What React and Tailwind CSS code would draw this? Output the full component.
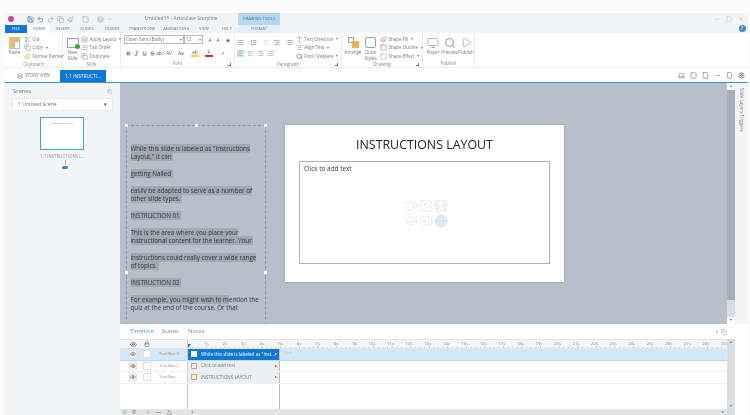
import React from "react";
import {
  Save, Undo2, Redo2, Scissors, Copy, Paintbrush, Bold, Italic, Underline, Strikethrough,
  List, ListOrdered, AlignLeft, AlignCenter, AlignRight, AlignJustify, Search, Settings,
  Laptop, Tablet, Smartphone, Eye, Lock, Video, Image, Film, GraduationCap, IdCard, Globe,
  ChevronDown, Play, Layers, Minus, Square, X, Monitor, Type, Trash2, Plus, Mountain,
} from "lucide-react";

const ribbonTabs = [
  ["INSERT", "w-[26px]"],
  ["SLIDES", "w-[22px]"],
  ["DESIGN", "w-[28px]"],
  ["TRANSITIONS", "w-[32px]"],
  ["ANIMATIONS", "w-[36px]"],
  ["VIEW", "w-[20px]"],
  ["HELP", "w-[26px]"],
];

const slideLines = [
  ["While this slide is labeled as \"Instructions", true],
  ["Layout,\" it can ", true],
  ["", false],
  ["getting Nailed ", true],
  ["", false],
  ["easily be adapted to serve as a number of", true],
  ["other slide types. ", true],
  ["", false],
  ["INSTRUCTION 01 ", true],
  ["", false],
  ["This is the area where you place your", true],
  ["instructional content for the learner. Your ", true],
  ["", false],
  ["instructions could really cover a wide range", true],
  ["of topics. ", true],
  ["", false],
  ["INSTRUCTION 02 ", true],
  ["", false],
  ["For example, you might wish to m", true, "ention the"],
  ["quiz at the end of the course. Or that", false],
];

const seconds = Array.from({ length: 29 }, (_, i) => i + 1);

const timelineRows = [
  { name: "Text Box 3", label: "While this slide is labeled as \"Inst...", selected: true, box: "bg-white border-white" },
  { name: "Text Box 1", label: "Click to add text", box: "border-[#aaa]" },
  { name: "Text Box", label: "INSTRUCTIONS LAYOUT", box: "border-[#d9a760] bg-[#f7efe2]" },
];

const SmallAction = ({ icon: Icon, label, color = "text-gray-500", arrow }) => (
  <div className="flex items-center gap-[1.5px] h-[8.5px] text-[4.5px] text-[#777] whitespace-nowrap">
    <Icon size={7} strokeWidth={1.5} className={`shrink-0 ${color}`} />
    <span>{label}</span>
    {arrow && <span className="text-[4px] ml-[1px]">▾</span>}
  </div>
);

const BigAction = ({ label, w, children }) => (
  <div className={`flex flex-col items-center shrink-0 text-[4.5px] leading-[5.5px] text-[#777] ${w}`}>
    <div className="h-[15px] flex items-center justify-center">{children}</div>
    <span className="text-center">{label}</span>
  </div>
);

const RibbonGroup = ({ title, w, launcher, children }) => (
  <div className={`flex flex-col shrink-0 h-full border-r border-[#ececec] ${w}`}>
    <div className="flex flex-1 pl-[2px] pt-[2px]">{children}</div>
    <div className="h-[7px] relative text-center text-[4.5px] leading-[6px] text-[#888]">
      {title}
      {launcher && <span className="absolute right-[3px] bottom-[1px] w-[3px] h-[3px] border-r border-b border-gray-500" />}
    </div>
  </div>
);

const FontIcon = ({ children, w = "w-[8px]", className = "" }) => (
  <span className={`text-center text-[4.6px] leading-[6px] text-[#555] shrink-0 whitespace-nowrap ${w} ${className}`}>{children}</span>
);

export default function App() {
  return (
    <div className="w-[750px] h-[415px] overflow-hidden bg-[#fbfbfb] pt-[13px] pl-[5px] pr-[2px] font-['Open_Sans',sans-serif] blur-[0.3px]">
      {/* title bar */}
      <div className="h-[12px] bg-[#f2f3f5] flex items-center relative">
        <div className="ml-[3px] w-[6px] h-[6px] rounded-full bg-[#c04a94]" />
        <div className="ml-[13px] flex items-center gap-[3px] text-gray-400 w-[90px] shrink-0">
          <Save size={7} className="text-[#1f6fb5]" />
          <Undo2 size={7} className="text-[#1f6fb5]" />
          <Redo2 size={7} />
          <Copy size={7} />
          <Paintbrush size={7} />
          <Square size={7} className="ml-[5px]" />
          <Layers size={7} className="ml-[5px]" />
          <ChevronDown size={6} />
        </div>
        <span className="ml-[28px] text-[5px] text-[#777] whitespace-nowrap">Untitled1* - Articulate Storyline</span>
        <div className="absolute left-[233px] top-0 w-[42px] h-[20px] flex flex-col">
          <div className="h-[12px] bg-[#b6d8f0] text-[4px] leading-[12px] text-center text-[#5a6b7a] whitespace-nowrap">DRAWING TOOLS</div>
          <div className="h-[8px] bg-[#e3f0fa] text-[4px] leading-[8px] text-center text-[#777]">FORMAT</div>
        </div>
        <div className="ml-auto flex items-center gap-[6px] pr-[4px] text-[#c0c0c0]">
          <Minus size={6} />
          <Square size={6} />
          <X size={6} />
        </div>
      </div>

      {/* ribbon tabs */}
      <div className="h-[8px] bg-[#f2f3f5] flex items-stretch text-[4.2px] text-[#777]">
        <div className="w-[22px] bg-[#0f78d4] text-white text-center leading-[8px]">FILE</div>
        <div className="w-[22px] ml-[1px] bg-white text-[#2b7cc4] text-center leading-[8px]">HOME</div>
        {ribbonTabs.map(([tab, w]) => (
          <div key={tab} className={`${w} text-center leading-[8px] whitespace-nowrap`}>{tab}</div>
        ))}
        <div className="ml-auto mr-[2.5px] w-[7px] h-[7px] rounded-full bg-[#3f8fd0] text-white text-center text-[5px] leading-[7px]">?</div>
      </div>

      {/* ribbon */}
      <div className="h-[35px] bg-white flex border-b border-[#eeeeee]">
        <RibbonGroup title="Clipboard" w="w-[58px]">
          <BigAction label="Paste" w="w-[15px]">
            <div className="w-[11px] h-[12px] bg-[#e9bd72] rounded-[1px] relative">
              <span className="absolute right-0 bottom-0 w-[6px] h-[8px] bg-white border border-[#bbb]" />
            </div>
          </BigAction>
          <div className="ml-[2px] flex flex-col">
            <SmallAction icon={Scissors} label="Cut" />
            <SmallAction icon={Copy} label="Copy" arrow />
            <SmallAction icon={Paintbrush} label="Format Painter" color="text-[#d2962f]" />
          </div>
        </RibbonGroup>
        <RibbonGroup title="Slide" w="w-[58px]">
          <BigAction label="New Slide" w="w-[15px]">
            <div className="w-[12px] h-[10px] border border-gray-400 relative">
              <span className="absolute -right-[2px] -bottom-[2px] w-[5px] h-[5px] rounded-full bg-[#4d9b3f]" />
            </div>
          </BigAction>
          <div className="ml-[1px] flex flex-col">
            <SmallAction icon={Layers} label="Apply Layout" arrow />
            <SmallAction icon={List} label="Tab Order" />
            <SmallAction icon={Copy} label="Duplicate" />
          </div>
        </RibbonGroup>
        <RibbonGroup title="Font" w="w-[114px]" launcher>
          <div className="flex flex-col gap-[5px] pl-[1px]">
            <div className="flex items-center">
              <div className="w-[60px] h-[9px] border border-[#bbb] flex items-center justify-between px-[1px] text-[4.6px] text-[#777]">
                <span>Open Sans (Body)</span>
                <span className="text-[3.5px]">▾</span>
              </div>
              <div className="w-[19px] h-[9px] border border-[#bbb] flex items-center justify-between px-[1px] text-[4.6px] text-[#777]">
                <span>12</span>
                <span className="text-[3.5px]">▾</span>
              </div>
              <FontIcon className="ml-[3px]">A</FontIcon>
              <FontIcon>A</FontIcon>
              <FontIcon className="ml-[2px] text-[#c04a6a]">◆</FontIcon>
            </div>
            <div className="flex items-center text-[#555]">
              <Bold size={5} strokeWidth={3} className="ml-[2px] mr-[3px] shrink-0" />
              <Italic size={5} strokeWidth={3} className="mr-[3px] shrink-0" />
              <Underline size={5} strokeWidth={3} className="mr-[3px] shrink-0" />
              <Strikethrough size={5} strokeWidth={3} className="mr-[1px] shrink-0" />
              <FontIcon>abc</FontIcon>
              <FontIcon className="ml-[1px] text-[#3f76ab]">AV</FontIcon>
              <FontIcon className="ml-[4px]">Aa</FontIcon>
              <FontIcon className="ml-[6px] border-b-2 border-[#efd92f]">ab</FontIcon>
              <FontIcon className="ml-[6px] border-b-2 border-[#cf2c2c]">A</FontIcon>
              <FontIcon className="ml-[6px] text-[#3f76ab]">✓</FontIcon>
            </div>
          </div>
        </RibbonGroup>
        <RibbonGroup title="Paragraph" w="w-[107px]" launcher>
          <div className="flex flex-col gap-[4px] pt-[3.5px]">
            <div className="flex items-center gap-[3px] text-gray-500">
              <List size={7} />
              <ListOrdered size={7} className="ml-[3px]" />
              <AlignLeft size={7} className="ml-[3px] text-gray-300" />
              <AlignRight size={7} />
              <List size={7} className="ml-[3px]" />
            </div>
            <div className="flex items-center gap-[3px] text-gray-400">
              <AlignLeft size={7} className="bg-[#cde4f5]" />
              <AlignCenter size={7} />
              <AlignRight size={7} />
              <AlignJustify size={7} />
            </div>
          </div>
          <div className="ml-auto flex flex-col mr-[3px]">
            <SmallAction icon={Type} label="Text Direction" arrow />
            <SmallAction icon={AlignCenter} label="Align Text" arrow />
            <SmallAction icon={Search} label="Find / Replace" color="text-[#333]" arrow />
          </div>
        </RibbonGroup>
        <RibbonGroup title="Drawing" w="w-[81px]" launcher>
          <BigAction label="Arrange" w="w-[18px]">
            <div className="w-[11px] h-[11px] relative">
              <span className="absolute left-0 top-0 w-[6px] h-[6px] border border-gray-400" />
              <span className="absolute right-0 bottom-0 w-[7px] h-[7px] bg-[#efb35a]" />
            </div>
          </BigAction>
          <BigAction label="Quick Styles" w="w-[17px]">
            <div className="w-[11px] h-[11px] border border-gray-400 rounded-[2px]" />
          </BigAction>
          <div className="ml-[1px] flex flex-col">
            <SmallAction icon={Paintbrush} label="Shape Fill" color="text-[#c9543f]" arrow />
            <SmallAction icon={Square} label="Shape Outline" color="text-[#2e6da4]" arrow />
            <SmallAction icon={Square} label="Shape Effect" color="text-[#6d9bc4]" arrow />
          </div>
        </RibbonGroup>
        <RibbonGroup title="Publish" w="w-[52px]">
          <BigAction label="Player" w="w-[16px]">
            <Monitor size={12} strokeWidth={1} className="text-gray-500" />
          </BigAction>
          <BigAction label="Preview" w="w-[17px]">
            <Search size={12} strokeWidth={1.5} className="text-[#4d7ea8]" />
          </BigAction>
          <BigAction label="Publish" w="w-[16px]">
            <Play size={11} strokeWidth={1} className="text-gray-500" />
          </BigAction>
        </RibbonGroup>
      </div>

      {/* view tabs */}
      <div className="h-[15px] bg-white border-b border-[#3f8fd0] flex items-end">
        <div className="ml-[12px] h-[13px] w-[36px] flex items-center gap-[2px] text-[4.4px] text-[#777] whitespace-nowrap">
          <Layers size={6} />
          STORY VIEW
        </div>
        <div className="ml-[7px] h-[12px] w-[46px] bg-[#0f78d4] text-white text-[4.8px] leading-[12px] text-center whitespace-nowrap">1.1 INSTRUCTI...</div>
        <div className="ml-auto flex items-center gap-[5px] h-[13px] pr-[3.5px] text-[#777]">
          <Laptop size={7} />
          <Square size={7} />
          <Tablet size={7} />
          <Minus size={7} />
          <Smartphone size={7} />
          <Settings size={7} className="text-[#444]" />
        </div>
      </div>

      {/* main area */}
      <div className="h-[332px] flex">
        <div className="w-[115px] shrink-0 bg-[#f3f4f6] px-[8px] pt-[4px]">
          <div className="flex justify-between items-center text-[5.6px] text-[#777] h-[9px]">
            <span>Scenes</span>
            <Copy size={5} className="text-gray-400" />
          </div>
          <div className="mt-[3px] h-[11px] bg-white shadow-[0_0_1px_#bbb] flex items-center justify-between px-[5px] text-[5.1px] text-[#777]">
            <span>1 Untitled Scene</span>
            <span className="text-[5px] text-[#333]">▾</span>
          </div>
          <div className="mt-[7px] ml-[27px] w-[44px] h-[33px] border border-[#4a9bd8] bg-white">
            <div className="text-[2px] text-center text-[#777] pt-[4px]">INSTRUCTIONS LAYOUT</div>
          </div>
          <div className="mt-[3px] text-[4.4px] text-center text-[#999] whitespace-nowrap">1.1 INSTRUCTIONS L...</div>
          <div className="ml-[49px] w-[6px] flex flex-col items-center">
            <span className="w-[1px] h-[5px] bg-[#d8a5a5]" />
            <span className="mt-[1px] w-[6px] h-[3px] rounded-full bg-[#4a86b8]" />
          </div>
        </div>

        <div className="flex-1 min-w-0 flex flex-col">
          <div className="h-[241px] flex shrink-0">
            <div className="flex-1 min-w-0 bg-[#b7bfc9] flex overflow-hidden">
              <div className="ml-[6px] mt-[42px] w-[140px] h-[260px] shrink-0 border border-dashed border-[#6e9cc4] pt-[19px] pl-[3.5px] relative">
                {["left-[-2px] top-[-2px]", "left-[68px] top-[-2px]", "right-[-2px] top-[-2px]", "left-[-2px] top-[145px]", "right-[-2px] top-[145px]"].map((pos) => (
                  <span key={pos} className={`absolute w-[3px] h-[3px] bg-white ${pos}`} />
                ))}
                {slideLines.map(([text, hl, rest], i) => (
                  <div key={i} className="h-[8.4px] text-[6.25px] leading-[8.4px] text-[#30343a] whitespace-pre">
                    <span className={hl ? "bg-[#a3a9b2]" : ""}>{text}</span>
                    {rest}
                  </div>
                ))}
              </div>

              <div className="ml-[19px] mt-[42px] w-[279px] h-[157px] shrink-0 bg-white shadow-[0_0_2px_#8a929c] flex flex-col items-center">
                <div className="mt-[12px] h-[16px] text-[12.4px] leading-[16px] text-[#222] whitespace-nowrap">INSTRUCTIONS LAYOUT</div>
                <div className="mt-[8px] w-[251px] h-[103px] border border-[#aeb0b2] relative px-[4px] pt-[2px] text-[6.4px] leading-[9px] text-[#333]">
                  Click to add text
                  <div className="absolute left-[104px] top-[37px] w-[44px] grid grid-cols-3 gap-[1px] text-[#d3dee8]">
                    <Video size={14} strokeWidth={1} />
                    <Image size={14} strokeWidth={1} />
                    <Film size={14} strokeWidth={1} />
                    <GraduationCap size={14} strokeWidth={1} />
                    <IdCard size={14} strokeWidth={1} />
                    <Globe size={14} strokeWidth={1} className="text-[#bcd8ee] fill-[#e3f0fa]" />
                  </div>
                </div>
              </div>

              <div className="ml-auto w-[8px] shrink-0 bg-[#a6afb9] flex flex-col items-center">
                <div className="w-[8px] h-[7px] bg-white text-[4px] text-center text-[#666]">▴</div>
                <div className="flex-1" />
                <div className="w-[8px] h-[17px] bg-[#d6dce3]" />
                <div className="w-[8px] h-[7px] bg-white text-[4px] text-center text-[#666]">▾</div>
              </div>
            </div>

            <div className="w-[13px] shrink-0 bg-[#f3f4f6] pt-[5px] pl-[3px]">
              <div className="[writing-mode:vertical-rl] text-[4.6px] text-[#777] whitespace-nowrap">Slide Layers  Triggers</div>
            </div>
          </div>

          {/* timeline */}
          <div className="flex-1 min-h-0 bg-white flex flex-col">
            <div className="h-[15px] flex items-center pr-[21px] text-[6px] text-[#888] shrink-0">
              <span className="ml-[10px] text-[#4a9bd8]">Timeline</span>
              <span className="ml-[8px]">States</span>
              <span className="ml-[9px]">Notes</span>
              <span className="ml-auto text-[4px]">▾</span>
              <Copy size={6} className="ml-[3px] text-gray-400" />
            </div>

            <div className="flex-1 flex min-h-0">
              <div className="flex-1 min-w-0 flex flex-col">
                <div className="h-[10px] flex bg-[#f4f5f6] border-y border-[#e4e4e4] shrink-0">
                  <div className="w-[68px] shrink-0 flex items-center text-gray-600 border-r border-[#c8ccd0]">
                    <Eye size={7} className="ml-[10px]" />
                    <Lock size={6} className="ml-[7px]" />
                  </div>
                  <div className="flex-1 min-w-0 flex overflow-hidden relative">
                    {seconds.map((s) => (
                      <div key={s} className="w-[18.55px] shrink-0 text-[4.3px] leading-[6px] text-[#888] text-right whitespace-nowrap">
                        <span className="relative left-[2px]">{s}s</span>
                      </div>
                    ))}
                    <svg className="absolute left-0 bottom-0" width="540" height="2">
                      {Array.from({ length: 116 }, (_, i) => (
                        <line key={i} x1={i * 4.64} x2={i * 4.64} y1={i % 4 === 0 ? 0 : 1} y2="2" stroke="#aaa" strokeWidth="0.6" />
                      ))}
                    </svg>
                    <span className="absolute left-[-3px] bottom-0 w-0 h-0 border-x-[3.5px] border-x-transparent border-t-[4px] border-t-[#1a7bd0]" />
                  </div>
                </div>

                {timelineRows.map((row) => (
                  <div
                    key={row.name}
                    className={`h-[11.5px] flex shrink-0 border-b ${row.selected ? "bg-[#d4e7f6] border-[#bcd9ef]" : "border-[#f0f0f0]"}`}
                  >
                    <div className="w-[68px] shrink-0 flex items-center border-r border-[#c8ccd0]">
                      <span className="ml-[9px] w-[8px] h-[8px] bg-white border border-[#e4e4e4] flex items-center justify-center text-[#444]">
                        <Eye size={6} />
                      </span>
                      <span className="ml-[6px] w-[8px] h-[8px] bg-white border border-[#ddd]" />
                      <span className="ml-[8px] text-[4.1px] text-[#888] whitespace-nowrap">{row.name}</span>
                    </div>
                    <div className={`w-[92px] shrink-0 flex items-center pl-[3px] text-[4.6px] whitespace-nowrap border-r border-[#bdbdbd] ${row.selected ? "bg-[#0f78d4] text-white" : "bg-[#eceef0] text-[#777]"}`}>
                      <span className={`w-[6px] h-[6px] mr-[4px] shrink-0 border ${row.box}`} />
                      <span className="flex-1 overflow-hidden">{row.label}</span>
                      <span className={`text-[4px] mr-[2px] ${row.selected ? "text-white" : "text-[#555]"}`}>▸</span>
                    </div>
                    {row.selected && <span className="ml-[4px] text-[4px] leading-[8px] text-[#b4c6d6]">Text</span>}
                  </div>
                ))}

                <div className="flex-1 flex min-h-0">
                  <div className="w-[68px] shrink-0 border-r border-[#c8ccd0]" />
                  <div className="w-[92px] shrink-0 border-r border-[#bdbdbd]" />
                </div>
                <div className="h-[6px] bg-[#e3e4e6] shrink-0 flex items-center text-[#666]">
                  <div className="w-[68px] shrink-0 flex items-center pl-[3px] gap-[5px]">
                    <Play size={4} />
                    <Trash2 size={4} />
                    <Plus size={4} className="ml-[5px]" />
                    <Minus size={7} />
                    <Mountain size={5} />
                  </div>
                  <span className="text-[4px] ml-[3px]">◂</span>
                  <span className="ml-auto text-[4px] mr-[3px]">▸</span>
                </div>
              </div>
              <div className="w-[8px] shrink-0 bg-[#dcdee0] flex flex-col justify-between items-center text-[4px] text-[#777] pb-[6px]">
                <span>▴</span>
                <span>▾</span>
              </div>
              <div className="w-[13px] shrink-0" />
            </div>
          </div>
        </div>
      </div>
    </div>
  );
}
